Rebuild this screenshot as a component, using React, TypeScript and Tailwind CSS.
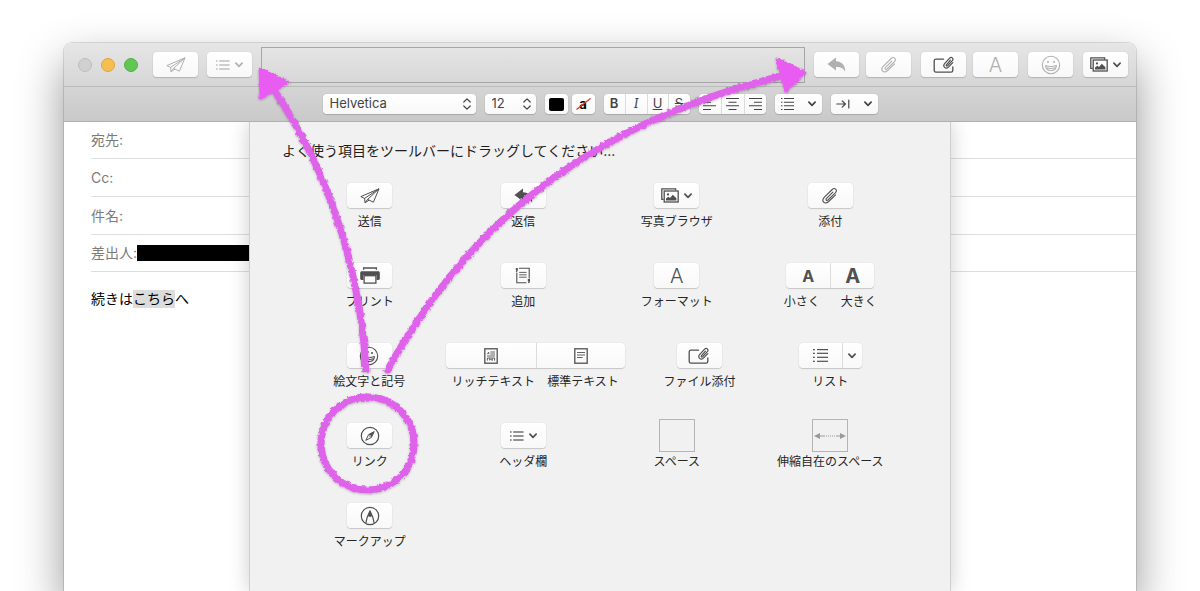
import type { ReactNode } from "react";
import clsx from "clsx";

const surface =
  "flex items-center justify-center bg-linear-to-b from-white to-[#f8f8f8] shadow-[0_0_1px_rgba(0,0,0,0.22),0_1px_1px_rgba(0,0,0,0.16)]";

/* ---------- icons ---------- */

function PlaneIcon() {
  return (
    <svg width="20" height="16" viewBox="0 0 20 16" fill="none" stroke="currentColor" strokeWidth="1" strokeLinejoin="round" aria-hidden="true">
      <path d="M19 .8 .8 8.6 4.6 10.4 19 .8 7.6 11.4 13.4 14.2 19 .8Z" />
      <path d="M4.6 10.4 5 14.8 7.6 11.4M5 14.8 9 12.2" />
    </svg>
  );
}

function BulletsIcon({ wide = false }: { wide?: boolean }) {
  return wide ? (
    <svg width="15" height="13" viewBox="0 0 15 13" fill="currentColor" aria-hidden="true">
      {[0, 4, 8, 12].map((y) => (
        <g key={y}>
          <rect x="0" y={y - (y ? 0.3 : 0)} width="1.8" height="1.3" />
          <rect x="4" y={y - (y ? 0.3 : 0)} width="11" height="1.2" />
        </g>
      ))}
    </svg>
  ) : (
    <svg width="14" height="10" viewBox="0 0 14 10" fill="currentColor" aria-hidden="true">
      {[0.4, 4.4, 8.4].map((y) => (
        <g key={y}>
          <rect x="0" y={y} width="1.6" height="1.2" />
          <rect x="3.2" y={y} width="10.4" height="1.2" />
        </g>
      ))}
    </svg>
  );
}

function Chevron() {
  return (
    <svg width="8" height="6" viewBox="0 0 8 6" fill="none" stroke="currentColor" strokeWidth="1.7" strokeLinecap="round" strokeLinejoin="round" aria-hidden="true">
      <path d="M.9 1.2 4 4.4 7.1 1.2" />
    </svg>
  );
}

function ReplyIcon() {
  return (
    <svg width="19" height="16" viewBox="0 0 19 16" fill="currentColor" aria-hidden="true">
      <path d="M.5 7 9 .6V4.3C14.6 4.6 18.4 8 18.2 14.8 16.6 11.2 13.6 9.9 9 9.9V13.6Z" />
    </svg>
  );
}

function ClipIcon() {
  return (
    <svg width="18" height="18" viewBox="0 0 18 18" fill="none" stroke="currentColor" strokeWidth="1.1" strokeLinecap="round" aria-hidden="true">
      <path d="M11.8 5.2 5.6 11.4C4.2 12.8 5.6 14.2 7 12.9L14.3 5.8C16.9 3 13.8 .1 11.2 2.5L3.4 10.2C-.3 14.2 3.8 18 7.6 14.5L14.6 7.8" />
    </svg>
  );
}

function FileClipIcon() {
  return (
    <svg width="22" height="18" viewBox="0 0 22 18" fill="none" stroke="currentColor" strokeLinecap="round" strokeLinejoin="round" aria-hidden="true">
      <path strokeWidth="1.3" d="M10.6 3.2H3C1.9 3.2 1.2 3.9 1.2 5V14.4C1.2 15.5 1.9 16.2 3 16.2H18C19.1 16.2 19.8 15.5 19.8 14.4V11" />
      <path strokeWidth="1.2" d="M17.4 4.2 13.6 8.6C12.8 9.6 13.8 10.5 14.7 9.6L19.3 4.7C21 2.6 18.6 .3 16.6 2.1L11.6 7.7C9.4 10.5 12.6 13.7 15.4 11.1L19.8 6.6" />
    </svg>
  );
}

function SmileIcon() {
  return (
    <svg width="20" height="20" viewBox="0 0 20 20" fill="none" stroke="currentColor" strokeWidth="1.1" aria-hidden="true">
      <circle cx="10" cy="10" r="8.7" />
      <circle cx="7" cy="7" r="1" fill="currentColor" stroke="none" />
      <circle cx="13" cy="7" r="1" fill="currentColor" stroke="none" />
      <path strokeLinejoin="round" d="M4.6 10.6C8 11.7 12 11.7 15.4 10.6 15 17.2 5 17.2 4.6 10.6Z" />
      <path d="M5.6 12.8C8.4 13.7 11.6 13.7 14.4 12.8" />
    </svg>
  );
}

function PhotosIcon() {
  return (
    <svg width="18" height="15" viewBox="0 0 18 15" fill="none" stroke="currentColor" strokeWidth="1.3" aria-hidden="true">
      <path d="M2.6 11.4H.8V.8H14.6V2.6" />
      <rect x="3.2" y="3" width="14" height="11" />
      <circle cx="7" cy="6.4" r="1.1" fill="currentColor" stroke="none" />
      <path d="M5 12.4V10.4L7.4 8.8 9 10 11.8 6.8 15.4 10.2V12.4Z" fill="currentColor" stroke="none" />
    </svg>
  );
}

function PrinterIcon() {
  return (
    <svg width="20" height="17" viewBox="0 0 20 17" aria-hidden="true">
      <path d="M3.6 2.8V1H16.4V2.8" fill="none" stroke="currentColor" strokeWidth="1.3" />
      <path d="M1.8 4.2H18.2C19.2 4.2 19.8 4.9 19.8 5.8V11.6C19.8 12.4 19.3 12.9 18.4 12.9H16.6V8H3.4V12.9H1.6C.7 12.9.2 12.4.2 11.6V5.8C.2 4.9.8 4.2 1.8 4.2Z" fill="currentColor" />
      <rect x="4.1" y="8.7" width="11.8" height="7.4" fill="none" stroke="currentColor" strokeWidth="1.3" />
    </svg>
  );
}

function AppendIcon() {
  return (
    <svg width="16" height="17" viewBox="0 0 16 17" fill="none" stroke="currentColor" strokeWidth="1.1" aria-hidden="true">
      <path d="M4 1.2H14.2V11.6M11.4 15.8H1.8V5.4" />
      <path strokeWidth=".9" d="M4.2 5.4H11.6M4.2 7.8H11.6M4.2 10.2H11.6" />
      <path fill="currentColor" stroke="none" d="M.8 1H2.8V3C2.8 4.2 2 5 .9 5.1V4.2L1.6 3.2H.8ZM12.8 12H15V14C15 15.4 14.2 16.2 13 16.3V15.4L13.7 14.2H12.8Z" />
    </svg>
  );
}

function DocumentIcon({ rich = false }: { rich?: boolean }) {
  return (
    <svg width="14" height="16" viewBox="0 0 14 16" fill="none" stroke="currentColor" strokeWidth="1.3" aria-hidden="true">
      <rect x=".8" y=".8" width="12.4" height="14.4" />
      {rich ? (
        <g strokeWidth=".9">
          <path d="M6.4 4H11M6.4 6H11M3 8H11" />
          <path d="M3.4 6.2 4.6 4.2 5 6.2" />
          <path d="M3.4 12.6V10H10.6V12.6M5.6 12.4V10.6L8.4 12.4V10.4" />
        </g>
      ) : (
        <path strokeWidth=".9" d="M3 4.5H11M3 7H11M3 9.5H8.6" />
      )}
    </svg>
  );
}

function CompassIcon() {
  return (
    <svg width="20" height="20" viewBox="0 0 20 20" fill="none" stroke="currentColor" strokeWidth="1.2" aria-hidden="true">
      <circle cx="10" cy="10" r="8.7" />
      <path strokeWidth="1" strokeLinejoin="round" d="M14.2 5.6 11.4 11.4 5.8 14.4 8.6 8.6Z" />
      <path fill="currentColor" stroke="none" d="M14.2 5.6 11.4 11.4 8.6 8.6ZM10 9 9 11 11 10Z" />
    </svg>
  );
}

function MarkupIcon() {
  return (
    <svg width="20" height="20" viewBox="0 0 20 20" fill="none" stroke="currentColor" strokeWidth="1.2" strokeLinejoin="round" aria-hidden="true">
      <circle cx="10" cy="10" r="8.7" />
      <path d="M5.8 17.4 7.2 11.2 10 5 12.8 11.2 14.2 17.4" />
      <path fill="currentColor" stroke="none" d="M10 4 12.6 10.8 11.2 10.2 10 11.2 8.8 10.2 7.4 10.8Z" />
    </svg>
  );
}

function UpDown() {
  return (
    <svg className="pointer-events-none absolute right-1 top-1/2 -translate-y-1/2" width="10" height="14" viewBox="0 0 10 14" fill="none" stroke="#444" strokeWidth="1.2" strokeLinecap="round" strokeLinejoin="round" aria-hidden="true">
      <path d="M1.8 5 5 1.8 8.2 5M1.8 9 5 12.2 8.2 9" />
    </svg>
  );
}

function AlignIcon({ kind }: { kind: "left" | "center" | "right" }) {
  const d = {
    left: "M0 .5H13M0 4.2H8M0 7.8H13M0 11.5H8",
    center: "M0 .5H13M2.5 4.2H10.5M0 7.8H13M2.5 11.5H10.5",
    right: "M0 .5H13M5 4.2H13M0 7.8H13M5 11.5H13",
  }[kind];
  return (
    <svg width="13" height="12" viewBox="0 0 13 12" stroke="currentColor" strokeWidth="1.1" aria-hidden="true">
      <path d={d} />
    </svg>
  );
}

function IndentIcon() {
  return (
    <svg width="14" height="10" viewBox="0 0 14 10" fill="none" stroke="currentColor" strokeWidth="1.2" strokeLinecap="round" strokeLinejoin="round" aria-hidden="true">
      <path d="M.8 5H9.4M6.2 1.9 9.4 5 6.2 8.1M12.8 1V9" />
    </svg>
  );
}

function StretchIcon() {
  return (
    <svg width="32" height="8" viewBox="0 0 32 8" fill="#999" stroke="#999" aria-hidden="true">
      <path stroke="none" d="M0 4 6 1V7ZM32 4 26 1V7Z" />
      <path d="M6 4H10M22 4H26" />
      <path strokeDasharray="1 1" d="M10 4H22" />
    </svg>
  );
}

/* ---------- controls ---------- */

function ToolButton({ label, dim, children }: { label: string; dim?: boolean; children: ReactNode }) {
  return (
    <button
      type="button"
      aria-label={label}
      className={clsx(surface, "h-[25px] w-[45px] shrink-0 gap-[5px] rounded", dim ? "text-[#b0b0b0]" : "text-[#505050]")}
    >
      {children}
    </button>
  );
}

function Segments({ items, height }: { items: { label: string; width: string; icon: ReactNode }[]; height: string }) {
  return (
    <div className={clsx(surface, height, "overflow-hidden rounded")}>
      {items.map((item, i) => (
        <button
          key={item.label}
          type="button"
          aria-label={item.label}
          className={clsx("flex h-full items-center justify-center", item.width, i > 0 && "border-l border-[#dcdcdc]")}
        >
          {item.icon}
        </button>
      ))}
    </div>
  );
}

function Cell({ caption, children }: { caption: ReactNode; children: ReactNode }) {
  return (
    <div className="flex flex-col items-center gap-[6px]">
      <div className="flex h-[25px] items-center justify-center">{children}</div>
      <div className="whitespace-nowrap text-xs leading-4 text-[#262626]">{caption}</div>
    </div>
  );
}

function Item({ label, children }: { label: string; children: ReactNode }) {
  return (
    <Cell caption={label}>
      <ToolButton label={label}>{children}</ToolButton>
    </Cell>
  );
}

const fields = [
  { id: "to", label: "宛先:", height: "h-[37px]" },
  { id: "cc", label: "Cc:", height: "h-[38px]" },
  { id: "subject", label: "件名:", height: "h-[38px]" },
];

function TitleBar() {
  return (
    <header className="flex h-11 items-center border-b border-[#bcbcbc] bg-linear-to-b from-[#e6e6e6] to-[#d6d6d6] pl-[14px] pr-2">
      <div className="flex shrink-0 gap-[9px]">
        <button type="button" aria-label="閉じる" className="size-[14px] rounded-full border border-[#bdbdbd] bg-[#d0d0d0]" />
        <button type="button" aria-label="しまう" className="size-[14px] rounded-full border border-[#dfa43c] bg-[#f5bf4f]" />
        <button type="button" aria-label="拡大" className="size-[14px] rounded-full border border-[#54b046] bg-[#62c655]" />
      </div>
      <div className="ml-[15px] flex shrink-0 gap-[9px]">
        <ToolButton label="送信" dim><PlaneIcon /></ToolButton>
        <ToolButton label="ヘッダ欄" dim>
          <BulletsIcon />
          <Chevron />
        </ToolButton>
      </div>
      <div className="mx-[9px] h-9 min-w-0 flex-1 border border-[#a6a6a6]" />
      <div className="flex shrink-0 gap-[10px]">
        <div className="flex gap-[7px]">
          <ToolButton label="返信" dim><ReplyIcon /></ToolButton>
          <ToolButton label="添付" dim><ClipIcon /></ToolButton>
        </div>
        <div className="flex gap-[7px]">
          <ToolButton label="ファイル添付"><FileClipIcon /></ToolButton>
          <ToolButton label="フォーマット" dim><span className="text-xl leading-6 font-light">A</span></ToolButton>
        </div>
        <ToolButton label="絵文字と記号" dim><SmileIcon /></ToolButton>
        <ToolButton label="写真ブラウザ">
          <PhotosIcon />
          <Chevron />
        </ToolButton>
      </div>
    </header>
  );
}

function FormatBar() {
  return (
    <div className="flex h-[35px] items-center justify-center gap-[9px] border-b border-[#b0b0b0] bg-linear-to-b from-[#d5d5d5] to-[#c9c9c9] text-[13px] text-[#444]">
      <div className="relative">
        <select aria-label="フォント" className={clsx(surface, "h-5 w-[153px] appearance-none rounded pl-[7px]")}>
          <option>Helvetica</option>
        </select>
        <UpDown />
      </div>
      <div className="relative">
        <select aria-label="サイズ" className={clsx(surface, "h-5 w-[51px] appearance-none rounded pl-[7px]")}>
          <option>12</option>
        </select>
        <UpDown />
      </div>
      <div className="flex gap-1">
        <button type="button" aria-label="文字色" className={clsx(surface, "h-5 w-[23px] rounded")}>
          <span className="h-[13px] w-[15px] rounded-xs bg-black" />
        </button>
        <button type="button" aria-label="背景色" className={clsx(surface, "relative h-5 w-[23px] rounded font-bold leading-4 text-black")}>
          a
          <svg className="absolute inset-x-1 inset-y-1" width="15" height="12" viewBox="0 0 15 12" stroke="#d8392b" strokeWidth="1.3" aria-hidden="true">
            <path d="M.5 11.5 14.5.5" />
          </svg>
        </button>
      </div>
      <Segments
        height="h-5"
        items={[
          { label: "ボールド", width: "w-[21px]", icon: <b className="font-semibold">B</b> },
          { label: "イタリック", width: "w-[22px]", icon: <i className="font-serif text-sm">I</i> },
          { label: "アンダーライン", width: "w-[21px]", icon: <u>U</u> },
          { label: "取り消し線", width: "w-[22px]", icon: <s>S</s> },
        ]}
      />
      <Segments
        height="h-5"
        items={[
          { label: "左揃え", width: "w-[22px]", icon: <AlignIcon kind="left" /> },
          { label: "中央揃え", width: "w-[23px]", icon: <AlignIcon kind="center" /> },
          { label: "右揃え", width: "w-[22px]", icon: <AlignIcon kind="right" /> },
        ]}
      />
      <button type="button" aria-label="リスト" className={clsx(surface, "h-5 w-[47px] gap-[14px] rounded")}>
        <svg width="13" height="12" viewBox="0 0 13 12" stroke="currentColor" strokeWidth="1.1" aria-hidden="true">
          <path d="M0 .5H1.5M0 4.2H1.5M0 7.8H1.5M0 11.5H1.5M3 .5H13M3 4.2H13M3 7.8H13M3 11.5H13" />
        </svg>
        <Chevron />
      </button>
      <button type="button" aria-label="インデント" className={clsx(surface, "h-5 w-[47px] gap-[14px] rounded")}>
        <IndentIcon />
        <Chevron />
      </button>
    </div>
  );
}

function Palette() {
  return (
    <section
      aria-label="ツールバーをカスタマイズ"
      className="absolute inset-y-0 left-1/2 w-[702px] -translate-x-1/2 border-x border-[#cfcfcf] bg-[#f1f1f1] px-[43px] pt-[18px] shadow-[0_0_20px_rgba(0,0,0,0.2)]"
    >
      <p className="-ml-[11px] text-sm leading-[22px] text-[#1e1e1e]">よく使う項目をツールバーにドラッグしてください...</p>
      <div className="mt-[21px] flex flex-col gap-[33px]">
        <div className="grid grid-cols-4">
          <Item label="送信"><PlaneIcon /></Item>
          <Item label="返信"><ReplyIcon /></Item>
          <Item label="写真ブラウザ">
            <PhotosIcon />
            <Chevron />
          </Item>
          <Item label="添付"><ClipIcon /></Item>
        </div>
        <div className="grid grid-cols-4">
          <Item label="プリント"><PrinterIcon /></Item>
          <Item label="追加"><AppendIcon /></Item>
          <Item label="フォーマット"><span className="text-xl leading-6 font-light">A</span></Item>
          <Cell caption={<span className="flex gap-[21px]"><span>小さく</span><span>大きく</span></span>}>
            <Segments
              height="h-[25px]"
              items={[
                { label: "小さく", width: "w-11", icon: <span className="text-base font-bold text-[#505050]">A</span> },
                { label: "大きく", width: "w-11", icon: <span className="text-xl leading-6 font-bold text-[#505050]">A</span> },
              ]}
            />
          </Cell>
        </div>
        <div className="grid grid-cols-[153fr_178fr_150fr_112fr_21fr] text-[#505050]">
          <Item label="絵文字と記号"><SmileIcon /></Item>
          <Cell caption={<span className="flex gap-3"><span>リッチテキスト</span><span>標準テキスト</span></span>}>
            <Segments
              height="h-[25px]"
              items={[
                { label: "リッチテキスト", width: "w-[90px]", icon: <DocumentIcon rich /> },
                { label: "標準テキスト", width: "w-[89px]", icon: <DocumentIcon /> },
              ]}
            />
          </Cell>
          <Item label="ファイル添付"><FileClipIcon /></Item>
          <Cell caption="リスト">
            <Segments
              height="h-[25px]"
              items={[
                { label: "リスト", width: "w-[43px]", icon: <BulletsIcon wide /> },
                { label: "リストの種類", width: "w-5", icon: <Chevron /> },
              ]}
            />
          </Cell>
        </div>
        <div className="grid grid-cols-4">
          <Item label="リンク"><CompassIcon /></Item>
          <Item label="ヘッダ欄">
            <BulletsIcon />
            <Chevron />
          </Item>
          <Cell caption="スペース">
            <div className="h-[33px] w-9 shrink-0 border border-[#b5b5b5]" />
          </Cell>
          <Cell caption="伸縮自在のスペース">
            <div className="flex h-[33px] w-9 shrink-0 items-center justify-center border border-[#b5b5b5]">
              <StretchIcon />
            </div>
          </Cell>
        </div>
        <div className="grid grid-cols-4">
          <Item label="マークアップ"><MarkupIcon /></Item>
        </div>
      </div>
    </section>
  );
}

function Annotations() {
  return (
    <svg className="pointer-events-none absolute left-1/2 top-0 w-[1200px] -translate-x-1/2" width="1200" height="591" viewBox="0 0 1200 591" fill="none" aria-hidden="true">
      <defs>
        <filter id="crayon" filterUnits="userSpaceOnUse" x="240" y="40" width="600" height="480">
          <feTurbulence type="fractalNoise" baseFrequency="0.3" numOctaves="2" seed="4" result="noise" />
          <feDisplacementMap in="SourceGraphic" in2="noise" scale="4" xChannelSelector="R" yChannelSelector="G" result="rough" />
          <feDropShadow in="rough" dx="0" dy="1" stdDeviation="1" floodColor="#000" floodOpacity="0.25" />
        </filter>
      </defs>
      <g filter="url(#crayon)" stroke="#de62ea" strokeWidth="7">
        <path d="M366 372C362 285 335 180 274 90" />
        <path d="M386 373C450 255 560 130 782 76" />
        <circle cx="367.5" cy="443.5" r="46.5" />
        <path d="M260 69 288 82 261 98Z" fill="#e85cf2" stroke="#e85cf2" strokeWidth="3" strokeLinejoin="round" />
        <path d="M777 59 805 72 786 91Z" fill="#e85cf2" stroke="#e85cf2" strokeWidth="3" strokeLinejoin="round" />
      </g>
    </svg>
  );
}

export default function App() {
  return (
    <div className="relative flex h-screen flex-col overflow-hidden bg-white px-16 pt-[43px] font-['Inter','Noto_Sans_CJK_JP',sans-serif]">
      <main className="flex min-h-0 flex-1 flex-col rounded-t-lg shadow-[0_0_0_1px_rgba(0,0,0,0.12),0_20px_46px_rgba(0,0,0,0.42)]">
        <div className="overflow-hidden rounded-t-lg">
          <TitleBar />
          <FormatBar />
        </div>
        <div className="relative min-h-0 flex-1 overflow-hidden bg-white">
          <form className="pl-[27px] text-sm text-[#7b7b7b]">
            {fields.map((f) => (
              <div key={f.id} className={clsx("flex items-center border-b border-[#dedede]", f.height)}>
                <label htmlFor={f.id} className="shrink-0">{f.label}</label>
                <input id={f.id} className="h-6 min-w-0 flex-1 outline-none" />
              </div>
            ))}
            <div className="flex h-[37px] items-center border-b border-[#dedede]">
              <label htmlFor="from" className="shrink-0">差出人:</label>
              <input id="from" readOnly className="h-4 w-[200px] bg-black outline-none" />
            </div>
          </form>
          <p className="mt-[17px] pl-[27px] text-sm leading-5 text-black">
            続きは<a href="#link" className="inline-block bg-[#dcdcdc] leading-[18px]">こちら</a>へ
          </p>
          <Palette />
        </div>
      </main>
      <Annotations />
    </div>
  );
}
